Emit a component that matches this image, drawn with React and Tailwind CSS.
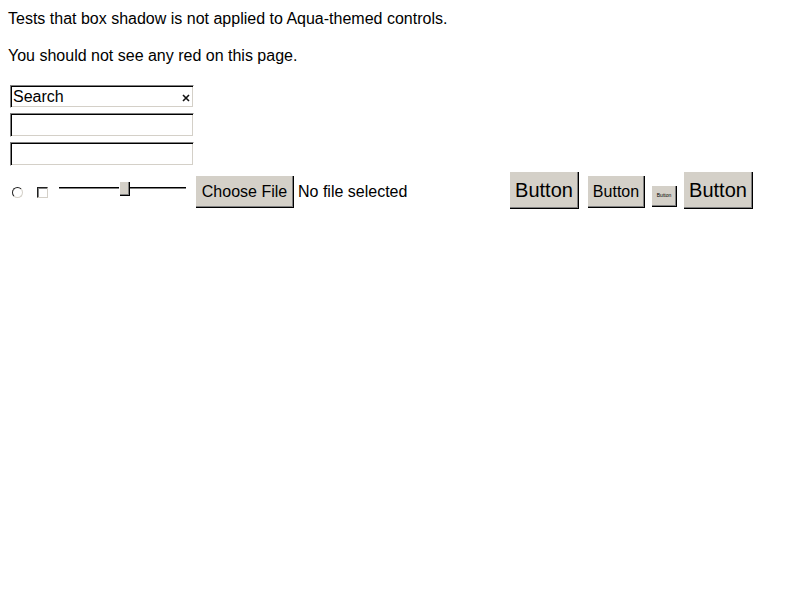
import React from 'react';

const font = { fontFamily: '"Liberation Sans", Arial, sans-serif' };

const Field = ({ className = '', children }) => (
  <div className={`relative w-[184px] border-t border-l border-t-[#808080] border-l-[#808080] border-b border-r border-b-white border-r-white shadow-[inset_1px_1px_0_#000,inset_-1px_-1px_0_#d4d0c8] bg-white ${className}`}>
    {children}
  </div>
);

const Btn = ({ className = '', children }) => (
  <div className={`flex items-center justify-center bg-[#d4d0c8] text-black shadow-[inset_1px_1px_0_#fff,inset_-1px_-1px_0_#000,inset_-2px_-2px_0_#808080] ${className}`}>
    {children}
  </div>
);

const App = () => {
  return (
    <div className="min-h-[600px] bg-white px-2 pt-[9px] text-black" style={font}>
      <p className="text-[16px] leading-[20px]">Tests that box shadow is not applied to Aqua-themed controls.</p>
      <p className="mt-[17px] text-[16px] leading-[20px]">You should not see any red on this page.</p>

      <div className="mt-[19px] ml-[2px] flex flex-col">
        <Field className="h-[23px]">
          <span className="absolute left-[2px] top-[1px] text-[16px] leading-[20px]">Search</span>
          <svg className="absolute right-[3px] top-[8px]" width="8" height="8" viewBox="0 0 8 8">
            <path d="M1 1 L7 7 M7 1 L1 7" stroke="#111" strokeWidth="1.6" fill="none" />
          </svg>
        </Field>
        <Field className="mt-[5px] h-[24px]" />
        <Field className="mt-[5px] h-[24px]" />
      </div>

      <div className="mt-[5px] flex items-start h-[38px]">
        {/* radio */}
        <div className="ml-[4px] mt-[16px] h-[11px] w-[11px] rounded-full border border-t-[#202020] border-l-[#202020] border-b-[#d4d0c8] border-r-[#d4d0c8] bg-white" />
        {/* checkbox */}
        <div className="ml-[14px] mt-[16px] h-[11px] w-[11px] border border-t-[#202020] border-l-[#202020] border-b-[#d4d0c8] border-r-[#d4d0c8] shadow-[inset_1px_1px_0_#808080] bg-white" />
        {/* slider */}
        <div className="relative ml-[11px] mt-[10px] h-[15px] w-[127px]">
          <div className="absolute left-0 right-0 top-[6px] h-[1px] bg-black" />
          <div className="absolute left-0 right-0 top-[7px] h-[1px] bg-[#808080]" />
          <div className="absolute left-[60px] top-0 h-[15px] w-[11px] bg-[#d4d0c8] shadow-[inset_1px_1px_0_#fff,inset_-1px_-1px_0_#000,inset_-2px_-2px_0_#808080]" />
        </div>
        {/* file input */}
        <Btn className="ml-[9px] mt-[4px] h-[33px] w-[99px] text-[16px]">Choose File</Btn>
        <span className="ml-[4px] mt-[11px] w-[111px] text-[16px] leading-[20px] whitespace-nowrap">No file selected</span>

        <Btn className="ml-[100px] h-[38px] w-[70px] text-[20px]">Button</Btn>
        <Btn className="ml-[8px] mt-[4px] h-[33px] w-[58px] text-[16px]">Button</Btn>
        <Btn className="ml-[6px] mt-[14px] h-[22px] w-[26px] text-[5px]">Button</Btn>
        <Btn className="ml-[6px] h-[38px] w-[70px] text-[20px]">Button</Btn>
      </div>
    </div>
  );
};

export default App;
